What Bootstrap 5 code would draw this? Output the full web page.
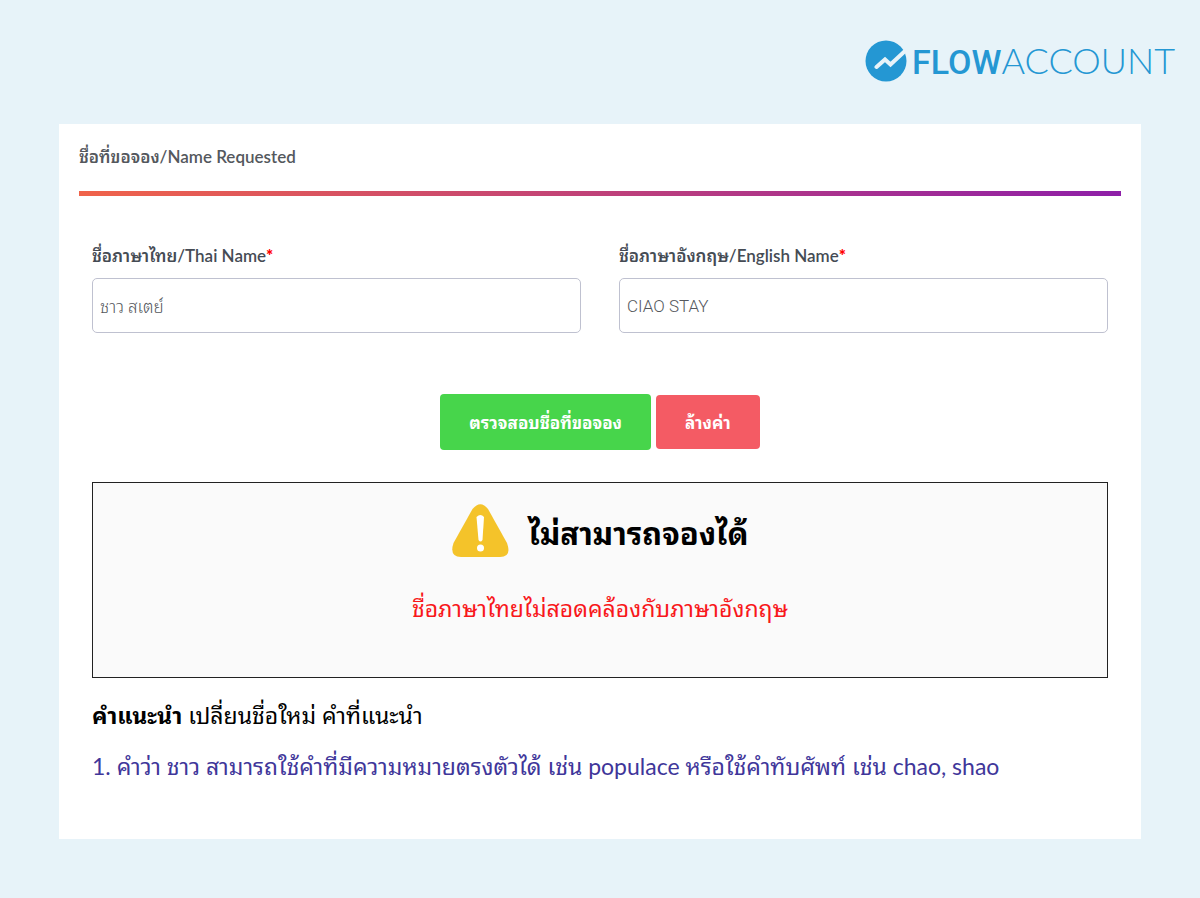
<!DOCTYPE html>
<html lang="th">
<head>
<meta charset="utf-8">
<meta name="viewport" content="width=device-width, initial-scale=1">
<title>FlowAccount - Name Requested</title>
<link href="https://cdn.jsdelivr.net/npm/bootstrap@5.3.0/dist/css/bootstrap.min.css" rel="stylesheet">
<style>
  body { background: #e7f3f9; font-family: Lato, "Noto Sans Thai Looped", "Noto Sans Thai", sans-serif; color: #000; }
  .site-header { padding: 36px 25px 0; height: 88px; }
  .brand { color: #2497d3; font-size: 36px; line-height: 48px; gap: 5px; height: 50px; }
  .brand-strong { font-family: Roboto, sans-serif; font-size: 34px; font-weight: 500; }
  .brand-thin { font-weight: 300; }
  .page-main { padding: 36px 59px 58px; }
  .panel { background: #fff; padding: 20px 20px 55px; }
  .panel-title { font-size: 17px; line-height: 26px; font-weight: 600; color: #54585d; }
  .title-rule { height: 5px; margin-top: 21px; background: linear-gradient(90deg, #f0634a, #8e1fa8); }
  .panel-body { padding: 46px 13px 0; }
  .field-row { --bs-gutter-x: 38px; }
  .field-label { font-size: 17px; line-height: 28px; font-weight: 600; color: #454b54; margin-bottom: 8px; }
  .required { color: #f00; font-weight: 900; }
  .field-input { height: 55px; padding: 0 7px; font-family: Roboto, "Noto Sans Thai Looped", "Noto Sans Thai", sans-serif; font-size: 17px; font-weight: 300; color: #55585d; border: 1px solid #bfc1d0; border-radius: 5px; }
  .actions { margin-top: 61px; gap: 5px; }
  .action-btn { font-size: 17px; font-weight: 700; color: #fff; border: 0; border-radius: 4px; padding: 2px 29px 0; height: 54px; }
  .check-btn { background: #47d54b; height: 56px; }
  .clear-btn { background: #f45b64; }
  .result { margin-top: 32px; border: 1px solid #222; background: #fafafa; height: 196px; padding-top: 18px; }
  .result-title { font-size: 31px; line-height: 56px; font-weight: 700; padding-top: 4px; }
  .result-head { gap: 20px; }
  .result-text { font-size: 23px; line-height: 36px; color: #f8171b; margin-top: 29px; }
  .advice { font-size: 23px; line-height: 36px; margin-top: 19px; }
  .suggestion { font-size: 23px; line-height: 36px; margin-top: 15px; color: #40369a; }
</style>
</head>
<body>
<header class="site-header d-flex justify-content-end">
  <a href="#" class="brand d-flex align-items-center text-decoration-none" aria-label="FlowAccount">
    <svg width="42" height="42" viewBox="0 0 42 42" aria-hidden="true">
      <circle cx="21" cy="21" r="20.500" fill="#2497d3"/>
      <path d="M11.500 27 L20 19.500 L25.500 24.500 L40 11" fill="none" stroke="#e7f3f9" stroke-width="4" stroke-linecap="round"/>
    </svg>
    <span><span class="brand-strong">FLOW</span><span class="brand-thin">ACCOUNT</span></span>
  </a>
</header>
<main class="page-main">
  <form class="panel">
    <h1 class="panel-title mb-0">ชื่อที่ขอจอง/Name Requested</h1>
    <div class="title-rule"></div>
    <div class="panel-body">
      <div class="row field-row">
        <div class="col-6">
          <label class="field-label d-block" for="thaiName">ชื่อภาษาไทย/Thai Name<span class="required">*</span></label>
          <input class="field-input form-control" id="thaiName" type="text" value="ชาว สเตย์">
        </div>
        <div class="col-6">
          <label class="field-label d-block" for="englishName">ชื่อภาษาอังกฤษ/English Name<span class="required">*</span></label>
          <input class="field-input form-control" id="englishName" type="text" value="CIAO STAY">
        </div>
      </div>
      <div class="actions d-flex justify-content-center align-items-center">
        <button type="button" class="action-btn check-btn">ตรวจสอบชื่อที่ขอจอง</button>
        <button type="reset" class="action-btn clear-btn">ล้างค่า</button>
      </div>
      <section class="result text-center">
        <div class="result-head d-flex justify-content-center align-items-center">
          <svg width="57" height="56" viewBox="0 0 57 56" aria-hidden="true">
            <path d="M20.500 6 Q28.500 -3.500 36 6 L55 40 Q60 54 48 54 H9 Q-3 54 1.500 40 Z" fill="#f4c32a"/>
            <path d="M24.500 14 Q28.500 10 32 14 L30.500 37 Q28.500 40 26.500 37 Z" fill="#fff"/>
            <circle cx="28.500" cy="45" r="3.500" fill="#fff"/>
          </svg>
          <h2 class="result-title mb-0">ไม่สามารถจองได้</h2>
        </div>
        <p class="result-text mb-0">ชื่อภาษาไทยไม่สอดคล้องกับภาษาอังกฤษ</p>
      </section>
      <p class="advice mb-0"><strong>คำแนะนำ</strong> เปลี่ยนชื่อใหม่ คำที่แนะนำ</p>
      <p class="suggestion mb-0">1. คำว่า ชาว สามารถใช้คำที่มีความหมายตรงตัวได้ เช่น populace หรือใช้คำทับศัพท์ เช่น chao, shao</p>
    </div>
  </form>
</main>
<script src="https://cdn.jsdelivr.net/npm/bootstrap@5.3.0/dist/js/bootstrap.bundle.min.js"></script>
</body>
</html>
